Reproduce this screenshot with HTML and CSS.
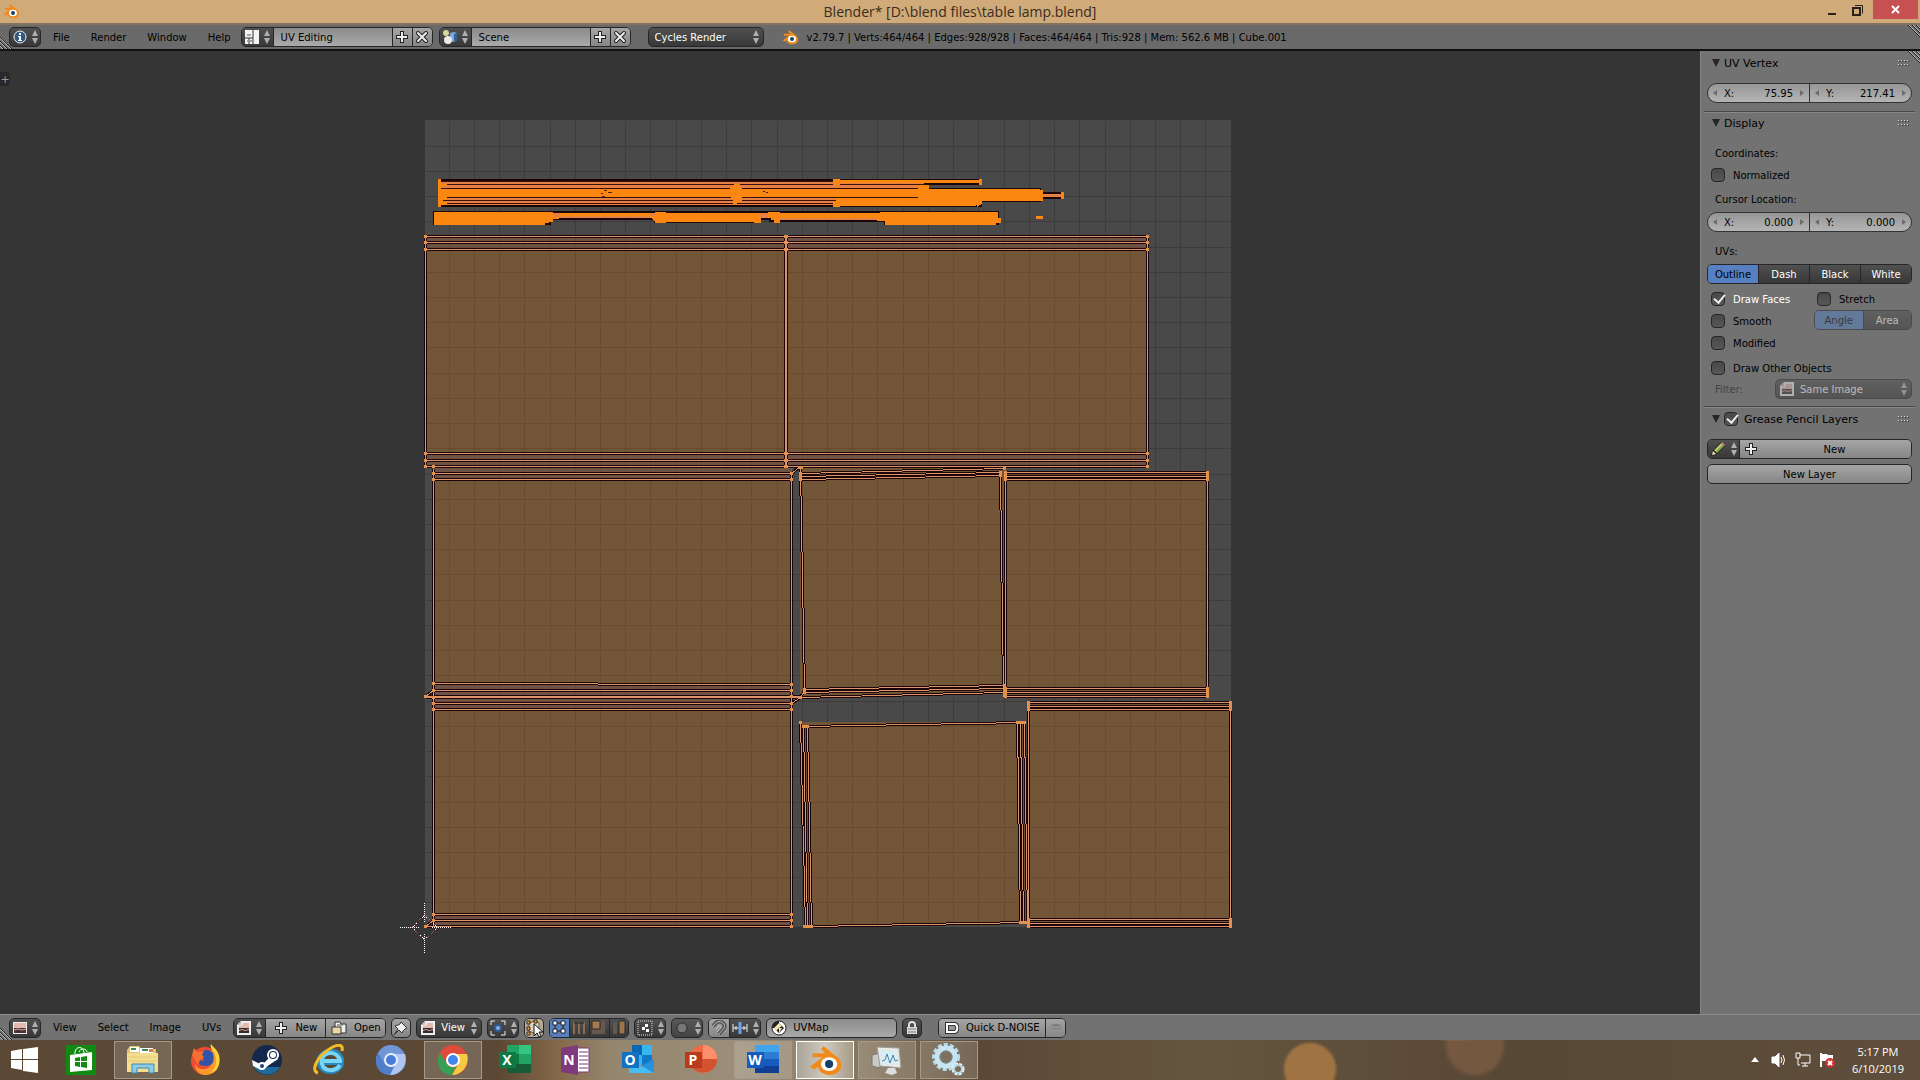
FILE: index.html
```html
<!DOCTYPE html>
<html lang="en">
  <head>
    <meta charset="utf-8">
    <title>Blender* [D:\blend files\table lamp.blend]</title>
    <link rel="stylesheet" href="styles.css">
  </head>
  <body>
    <!-- shared icons -->
    <svg class="defs" aria-hidden="true">
      <symbol id="updown" viewBox="0 0 6 14"><path d="M3 0L6 6H0zM3 14L6 8H0z"/></symbol>
      <symbol id="plus" viewBox="0 0 14 14"><path d="M5 1h4v4h4v4H9v4H5V9H1V5h4z" fill="#222"/><path d="M6 2h2v4h4v2H8v4H6V8H2V6h4z" fill="#eee"/></symbol>
      <symbol id="cross" viewBox="0 0 14 14"><path d="M3 3l8 8M11 3l-8 8" stroke="#222" stroke-width="4" stroke-linecap="round"/><path d="M3 3l8 8M11 3l-8 8" stroke="#eee" stroke-width="2" stroke-linecap="round"/></symbol>
      <symbol id="image" viewBox="0 0 14 14"><path d="M4 0h10v14H0V4z" fill="#eee"/><path d="M4 0v4H0z" fill="#b9b9b9"/><path d="M2 5h3l1-3h6v5H2z" fill="#e3b9ae"/><path d="M2 7h10v5H2z" fill="#3a2a2c"/><path d="M2 9l3-1 3 1 4-1v1l-4 1-3-1-3 1z" fill="#c9a49c"/></symbol>
      <symbol id="blender" viewBox="0 0 24 22"><path d="M1 16L10 9H3V6h9L9 3l2-2 9 7c3 2 4 4 4 7 0 4-4 7-9 7-4 0-8-3-8-6l-3 2z" fill="#f08a1c"/><ellipse cx="15" cy="14" rx="6" ry="5" fill="#fff"/><ellipse cx="15" cy="14" rx="3" ry="3" fill="#15406b"/></symbol>
      <symbol id="corner" viewBox="0 0 12 12"><path d="M0 0l12 12M4 0l8 8M8 0l4 4" stroke="#222"/><path d="M1 0l11 11M5 0l7 7M9 0l3 3" stroke="#bbb"/></symbol>
      <symbol id="grip" viewBox="0 0 11 6"><path d="M0 .5h11M0 4.5h11" stroke="#ddd" stroke-dasharray="1 2"/><path d="M1 1.5h11M1 5.5h11" stroke="#333" stroke-dasharray="1 2"/></symbol>
    </svg>

    <div class="title-bar">
      <svg class="title-logo" viewBox="0 0 24 22"><use href="#blender"/></svg>
      <h1>Blender* [D:\blend files\table lamp.blend]</h1>
      <div class="window-buttons">
        <button aria-label="Minimize"><svg width="12" height="12"><path d="M2 9h8v2H2z" fill="#2a2118"/></svg></button>
        <button aria-label="Restore"><svg width="12" height="12" fill="none" stroke="#2a2118"><path d="M1 4h7v7H1z" stroke-width="2"/><path d="M3 1.500h7.500v8"/></svg></button>
        <button class="close" aria-label="Close"><svg width="10" height="10"><path d="M1 1l7 7M8 1l-7 7" stroke="#fff" stroke-width="2"/></svg></button>
      </div>
    </div>

    <div class="header top-header">
      <svg class="corner start-corner"><use href="#corner"/></svg>
      <button class="menu-button" aria-label="Editor type">
        <svg width="14" height="14"><circle cx="7" cy="7" r="6" fill="#345a80" stroke="#e8eef4"/><path d="M6 3h2v2H6zM5 6h3v4h1v1H5v-1h1V7H5z" fill="#fff"/></svg>
        <svg class="updown"><use href="#updown"/></svg>
      </button>
      <nav class="menus">
        <button>File</button>
        <button>Render</button>
        <button>Window</button>
        <button>Help</button>
      </nav>
      <div class="group selector">
        <button class="dark" aria-label="Screen layout">
          <svg width="14" height="14"><path d="M0 0h14v14H0z" fill="#f4f4f4"/><path d="M8 0v14M0 8h8M4 8v6" stroke="#333"/><path d="M2 5h4M2 11h1M5 11h2" stroke="#555"/></svg>
          <svg class="updown"><use href="#updown"/></svg>
        </button>
        <input value="UV Editing" aria-label="Screen name">
        <button class="light" aria-label="Add screen"><svg width="14" height="14"><use href="#plus"/></svg></button>
        <button class="light" aria-label="Delete screen"><svg width="14" height="14"><use href="#cross"/></svg></button>
      </div>
      <div class="group selector">
        <button class="dark" aria-label="Scene list">
          <svg width="14" height="14"><circle cx="3" cy="3" r="3" fill="#d8d894"/><path d="M7 3l4-1 3 1v7l-3 2-4-1z" fill="#7fa9d8"/><path d="M11 4l3-1v7l-3 2z" fill="#35608f"/><circle cx="5" cy="10" r="4" fill="#e9e9e9"/></svg>
          <svg class="updown"><use href="#updown"/></svg>
        </button>
        <input value="Scene" aria-label="Scene name">
        <button class="light" aria-label="Add scene"><svg width="14" height="14"><use href="#plus"/></svg></button>
        <button class="light" aria-label="Delete scene"><svg width="14" height="14"><use href="#cross"/></svg></button>
      </div>
      <div class="select-box engine">
        <select aria-label="Render engine"><option>Cycles Render</option></select>
        <svg class="updown"><use href="#updown"/></svg>
      </div>
      <div class="stats">
        <svg width="16" height="14"><use href="#blender"/></svg>
        <span>v2.79.7 | Verts:464/464 | Edges:928/928 | Faces:464/464 | Tris:928 | Mem: 562.6 MB | Cube.001</span>
      </div>
      <svg class="corner"><use href="#corner"/></svg>
    </div>

    <div class="workspace">
      <main class="uv-editor">
        <button class="expand-tab" aria-label="Show tools">+</button>
        <svg class="uv-canvas" viewBox="0 51 1700 963">
          <defs>
            <g id="edges">
              <!-- shade sides -->
              <path d="M425 236H1147M425 242H1147M425 249H1147M425 453H1147M425 460H1147M425 466H1147M425 236V466M785 236V466M786 236V466M1147 236V466"/>
              <path d="M433 473H791M433 479H791M433 683H597M597 684H791M433 690H791M425 696H800M425 697H800M433 468V696M791 473V696M791 473L800 466M433 690L425 696"/>
              <path d="M433 703H791M433 709H791M433 914H791M433 920H791M425 926H791M433 697V926M791 697V926M791 703L800 697M433 920L425 926"/>
              <!-- tilted pieces -->
              <path d="M800 473L1004 468M801 476L1000 472M801 479L1000 475M800 467L804 690M1000 472L1003 690M804 689L1004 685M804 692L1004 688M800 697L1004 692M800 697L804 690"/>
              <path d="M800 722L805 926M803 726L807 926M807 726L811 926M1017 722L1020 922M1020 722L1023 922M1024 722L1027 922M803 726L1024 722M805 926H811L1027 922"/>
              <!-- right column -->
              <path d="M1005 472H1207M1005 476H1207M1005 479H1207M1005 688H1207M1005 692H1207M1005 696H1207M1005 472V696M1207 472V696"/>
              <path d="M1028 702H1230M1028 706H1230M1028 709H1230M1028 919H1230M1028 923H1230M1028 926H1230M1028 702V926M1230 702V926"/>
            </g>
          </defs>
          <rect class="uv-tile" x="425" y="120" width="806" height="807"/>
          <path class="grid" d="M449 120V926M474 120V926M499 120V926M524 120V926M550 120V926M575 120V926M600 120V926M625 120V926M650 120V926M676 120V926M701 120V926M726 120V926M751 120V926M777 120V926M802 120V926M827 120V926M852 120V926M877 120V926M903 120V926M928 120V926M953 120V926M978 120V926M1004 120V926M1029 120V926M1054 120V926M1079 120V926M1105 120V926M1130 120V926M1155 120V926M1180 120V926M1205 120V926
            M425 146H1231M425 171H1231M425 196H1231M425 221H1231M425 247H1231M425 272H1231M425 297H1231M425 322H1231M425 347H1231M425 373H1231M425 398H1231M425 423H1231M425 448H1231M425 474H1231M425 499H1231M425 524H1231M425 549H1231M425 574H1231M425 600H1231M425 625H1231M425 650H1231M425 675H1231M425 701H1231M425 726H1231M425 751H1231M425 776H1231M425 802H1231M425 827H1231M425 852H1231M425 877H1231M425 902H1231"/>
          <g class="faces">
            <path d="M425 236H1148V467H425zM433 467H792V927H433zM800 468H1004V692L800 697zM1005 472H1208V697H1005zM800 722L1024 722 1028 922 805 927zM1028 702H1231V927H1028z"/>
            <path class="strip" d="M425 236H1148V250H425zM425 453H1148V467H425zM433 467H792V480H433zM433 683H792V710H433zM433 914H792V927H433z"/>
          </g>
          <use href="#edges" class="edge-shadow"/>
          <use href="#edges" class="edge-line"/>
          <!-- lamp rods, packed too tight to tell the edges apart -->
          <path class="rod-outline" d="M439 180H981V184H925V189H1040V193H1063V198H1040V201H981V206H439zM434 212H998V224H885V221H770V219H755V222H655V219H550V224H434z"/>
          <path class="rod-lines" d="M439 181H836M439 184H925M439 188H925M439 197H918M439 200H838M439 203H838"/>
          <g class="solid">
            <path d="M441 189H918V197H441zM836 180H981V183H836zM918 189H1040V201H918zM836 198H976V206H836zM1039 190H1043V201H1039zM1061 192H1064V199H1061zM979 179H982V185H979z"/>
            <path d="M438 179h3v5h6v2h-6v3h10v8h-4v3h-4v2h4v3h-6v2h-3zM730 187h4v-3h6v4h2v14h-5v2h-4v-5h-2zM833 179h7v6h-7zM833 201h7v6h-7zM918 185h11v5h-11zM976 201h6v3l-5 3z"/>
            <path d="M434 212H553V217H559V219H553V222H545V225H434zM655 212H666V223H655zM650 216H760V222H655zM754 218H761V223H754zM559 213H650V216H559zM768 212H780V223H774V218H768zM666 213H760V221H666zM780 213H885V218H780zM880 212H998V218H1001V223H996V225H885V221H877zM1036 216H1043V219H1036z"/>
            <path class="specks" d="M596 188h2M603 190h3M600 193h2M607 192h4M601 196h3M762 191h2M765 192h2"/>
          </g>
          <path class="verts" d="M425 236h0M425 242h0M425 249h0M425 453h0M425 460h0M425 466h0M785 236h1M785 242h1M785 249h1M785 453h1M785 460h1M785 466h1M1147 236h0M1147 242h0M1147 249h0M1147 453h0M1147 460h0M1147 466h0
            M433 466h0M433 473h0M433 479h0M433 683h0M433 690h0M433 697h0M433 703h0M433 709h0M433 914h0M433 920h0M425 696h0M425 926h0M791 473h0M791 479h0M791 684h0M791 690h0M791 696h0M791 703h0M791 709h0M791 914h0M791 920h0M791 926h0
            M800 467h1M800 473v6M1004 468h0M1000 472v3M804 689v3M800 697h0M1004 685v10M1005 472v7M1207 472v7M1005 688v8M1207 688v8M800 722h0M803 726h4M1017 722h7M804 926h7M1020 922h6M1028 702v7M1230 702v7M1028 919v7M1230 919v7"/>
          <g class="cursor">
            <path class="cursor-red" d="M424 914L437 927 424 940 411 927z"/>
            <path d="M424 902V921M424 933V952M399 927H418M431 927H450M420 919l4-4 4 4M420 935l4 4 4-4M416 923l-4 4 4 4M433 923l4 4-4 4"/>
          </g>
        </svg>
      </main>

      <aside class="sidebar">
        <svg class="corner"><use href="#corner"/></svg>
        <section class="panel vertex">
          <h2><span class="tri"></span>UV Vertex<svg class="grip"><use href="#grip"/></svg></h2>
          <div class="number-pair">
            <label><i class="left"></i>X:<input value="75.95"><i class="right"></i></label>
            <label><i class="left"></i>Y:<input value="217.41"><i class="right"></i></label>
          </div>
        </section>
        <section class="panel display">
          <h2><span class="tri"></span>Display<svg class="grip"><use href="#grip"/></svg></h2>
          <p class="caption">Coordinates:</p>
          <label class="check"><input type="checkbox">Normalized</label>
          <p class="caption low">Cursor Location:</p>
          <div class="number-pair">
            <label><i class="left"></i>X:<input value="0.000"><i class="right"></i></label>
            <label><i class="left"></i>Y:<input value="0.000"><i class="right"></i></label>
          </div>
          <p class="caption">UVs:</p>
          <div class="group toggles">
            <button class="dark active">Outline</button>
            <button class="dark">Dash</button>
            <button class="dark">Black</button>
            <button class="dark">White</button>
          </div>
          <div class="options">
            <div class="option-column">
              <label class="check on"><input type="checkbox" checked>Draw Faces</label>
              <label class="check"><input type="checkbox">Smooth</label>
              <label class="check"><input type="checkbox">Modified</label>
            </div>
            <div class="option-column">
              <label class="check inset"><input type="checkbox">Stretch</label>
              <div class="group toggles disabled">
                <button class="dark active" disabled>Angle</button>
                <button class="dark" disabled>Area</button>
              </div>
            </div>
          </div>
          <label class="check"><input type="checkbox">Draw Other Objects</label>
          <div class="filter-row">
            <label for="filter">Filter:</label>
            <div class="select-box">
              <svg width="14" height="14"><use href="#image"/></svg>
              <select id="filter" disabled><option>Same Image</option></select>
              <svg class="updown"><use href="#updown"/></svg>
            </div>
          </div>
        </section>
        <section class="panel pencil">
          <h2><span class="tri"></span><label><input type="checkbox" checked>Grease Pencil Layers</label><svg class="grip"><use href="#grip"/></svg></h2>
          <div class="group">
            <button class="dark" aria-label="Grease pencil data">
              <svg width="16" height="16"><path d="M1 15l2-6 8-8 4 4-8 8z" fill="#222"/><path d="M4 9l7-7 3 3-7 7z" fill="#91a850"/><path d="M5 10l7-7" stroke="#d9e59c"/><path d="M11 2l1-1 3 3-1 1z" fill="#e08080"/><path d="M2 14l1-4 3 3z" fill="#f2dcb2"/></svg>
              <svg class="updown"><use href="#updown"/></svg>
            </button>
            <button class="light wide"><svg width="14" height="14"><use href="#plus"/></svg><span>New</span></button>
          </div>
          <button class="light single">New Layer</button>
        </section>
      </aside>
    </div>

    <div class="header bottom-header">
      <svg class="corner start-corner"><use href="#corner"/></svg>
      <button class="menu-button" aria-label="Editor type">
        <svg width="14" height="14"><path d="M0 1h14v12H0z" fill="#eee"/><path d="M1 2h12v5H1z" fill="#e3b9ae"/><path d="M1 7h12v5H1z" fill="#4a3136"/><path d="M1 9l4-1 4 1 4-1" stroke="#d9aca4" fill="none"/></svg>
        <svg class="updown"><use href="#updown"/></svg>
      </button>
      <nav class="menus">
        <button>View</button>
        <button>Select</button>
        <button>Image</button>
        <button>UVs</button>
      </nav>
      <div class="group">
        <button class="dark" aria-label="Browse image">
          <svg width="14" height="14"><use href="#image"/></svg>
          <svg class="updown"><use href="#updown"/></svg>
        </button>
        <button class="light action"><svg width="14" height="14"><use href="#plus"/></svg>New</button>
        <button class="light action"><svg width="16" height="14"><path d="M4 1h5l1 2h5v9H4z" fill="#eee" stroke="#333"/><path d="M1 6h9v7H1z" fill="#e9d9a0" stroke="#333"/><path d="M6 4h6" stroke="#555"/></svg>Open</button>
      </div>
      <button class="square" aria-label="Pin image"><svg width="16" height="16"><path d="M8 2l6 6-2 1-2 2-1 2-3-3-5 5 4-6-3-3 3-1 2-1z" fill="#eee" stroke="#333"/></svg></button>
      <div class="select-box view-mode">
        <svg width="14" height="14"><use href="#image"/></svg>
        <select aria-label="Editor mode"><option>View</option></select>
        <svg class="updown"><use href="#updown"/></svg>
      </div>
      <button class="menu-button" aria-label="Pivot">
        <svg width="16" height="16" fill="none"><path d="M1 5V1h4M11 1h4v4M15 11v4h-4M5 15H1v-4" stroke="#eee"/><circle cx="8" cy="8" r="3" fill="#8bb2e8" stroke="#2f5a94" stroke-width="2"/></svg>
        <svg class="updown"><use href="#updown"/></svg>
      </button>
      <button class="square sync" aria-label="Sync selection">
        <svg width="18" height="18"><path d="M4 4l5-2 5 2v8l-5 2-5-2z" fill="#d9d2c4" stroke="#6c5a40"/><path d="M2 2h3v3H2zM2 8h3v3H2zM2 13h3v3H2zM9 1h3v3H9z" fill="#f0a040" stroke="#402a10"/><path d="M9 5v12l3-3 2 4 2-1-2-4h4z" fill="#fff" stroke="#111"/></svg>
      </button>
      <div class="group modes">
        <button class="dark active" aria-label="Vertex"><svg width="16" height="16"><path d="M3 3h8v8H3z" stroke="#222" fill="none"/><path d="M1 1h4v4H1zM9 1h4v4H9zM1 9h4v4H1zM9 9h4v4H9z" fill="#fff" stroke="#222"/></svg></button>
        <button class="dark" aria-label="Edge"><svg width="16" height="16"><path d="M3 2v12M8 2v12M13 2v12" stroke="#8c6d50" stroke-width="2"/><path d="M3 3h10" stroke="#222"/></svg></button>
        <button class="dark" aria-label="Face"><svg width="16" height="16"><path d="M1 1h13v13H1z" fill="#66594d"/><path d="M1 1h8v8H1z" fill="#a67a4c" stroke="#2b2b2b"/></svg></button>
        <button class="dark" aria-label="Island"><svg width="16" height="16"><path d="M2 2h4v12H2z" fill="#5e5850"/><path d="M8 1h6v13H8z" fill="#9b744c" stroke="#2b2b2b"/></svg></button>
      </div>
      <button class="menu-button" aria-label="Sticky selection">
        <svg width="16" height="16"><path d="M1 1h14v14H1z" fill="none" stroke="#ddd" stroke-dasharray="1 1"/><path d="M8 4h3v3H8zM5 7h3v3H5zM9 9h3v3H9z" fill="#fff"/></svg>
        <svg class="updown"><use href="#updown"/></svg>
      </button>
      <button class="menu-button faded" aria-label="Proportional editing">
        <svg width="16" height="16"><circle cx="8" cy="8" r="5" fill="#777" stroke="#2e2e2e"/></svg>
        <svg class="updown"><use href="#updown"/></svg>
      </button>
      <div class="group">
        <button class="light snap" aria-label="Snap"><svg width="16" height="16" fill="none"><path d="M2 6l4-4c5-2 9 3 7 6l-5 6" stroke="#555" stroke-width="4"/><path d="M2 6l4-4c5-2 9 3 7 6l-5 6M5 9l3-3c2 0 2 1 2 2l-4 4" stroke="#bbb"/></svg></button>
        <button class="dark" aria-label="Snap element">
          <svg width="16" height="16"><path d="M1 4v8M15 4v8M4 6v4M12 6v4M1 8h14" stroke="#eee"/><path d="M8 2v12" stroke="#6aa2ee" stroke-width="3"/></svg>
          <svg class="updown"><use href="#updown"/></svg>
        </button>
      </div>
      <label class="uv-map">
        <svg width="16" height="16"><circle cx="8" cy="8" r="7" fill="#fff" stroke="#222"/><path d="M8 3L3 8H1c0-4 3-7 7-7zM8 3l5 5-5 5-5-5z" fill="#222"/><path d="M8 3l3 3-3 2-3 3-2-3zM8 8h3l-3 5z" fill="#f4e7b0"/></svg>
        <input value="UVMap" aria-label="UV map">
      </label>
      <button class="square dark lock" aria-label="Lock"><svg width="14" height="16"><path d="M4 8V5c0-4 6-4 6 0v3" fill="none" stroke="#ddd" stroke-width="2"/><path d="M2 7h10v7H2z" fill="#ddd"/><path d="M3 9h8M3 12h8" stroke="#777"/></svg></button>
      <div class="group denoise">
        <button class="light action"><svg width="14" height="12"><path d="M2 2h8c3 1 3 7 0 8H2z" fill="none" stroke="#333" stroke-width="4"/><path d="M2 2h8c3 1 3 7 0 8H2z" fill="none" stroke="#fff" stroke-width="2"/></svg>Quick D-NOISE</button>
        <button class="light arrow" aria-label="More"><svg width="14" height="12"><path d="M1 4c3-3 9-3 12 0-2 5-9 5-12 0z" fill="#808080"/><path d="M2 4c3 2 7 2 10 0" fill="none" stroke="#a8a8a8"/></svg></button>
      </div>
    </div>

    <footer class="taskbar">
      <button class="start" aria-label="Start"><svg width="28" height="26" fill="#fff"><path d="M0 4l11-2v10H0zM12 2l15-2v12H12zM0 13h11v10L0 21zM12 13h15v13l-15-2z"/></svg></button>
      <div class="apps">
        <button aria-label="Store"><svg width="30" height="30"><path d="M0 0h30v30H0z" fill="#118a11"/><path d="M4 10l22-3v18l-22 2z" fill="#fff"/><path d="M9 9V7c1-6 8-6 9 0v2M13 7c1-4 8-4 8 0" fill="none" stroke="#fff"/><path d="M9 13l5-1v4H9zM15 12l6-1v5h-6zM9 17h5v5l-5-1zM15 17h6v6l-6-1z" fill="#118a11"/></svg></button>
        <button class="open" aria-label="File Explorer"><svg width="34" height="32"><path d="M1 6l3-4h9l2 3h15v20H1z" fill="#e3c569"/><path d="M4 3h9v5H4zM14 4h13v5H14z" fill="#fff"/><path d="M5 5h5M16 6h6" stroke="#3b8b56" stroke-width="2"/><path d="M23 5h4v3h-4z" fill="#d77c51"/><path d="M1 9h31v19H1z" fill="#f3dd91"/><path d="M2 13h29M2 17h29" stroke="#e3ca77"/><path d="M6 29V20h22v9h-5v-5H11v5z" fill="#8dcbe8" stroke="#3d89b2"/></svg></button>
        <button aria-label="Firefox"><svg width="32" height="32"><circle cx="16" cy="17" r="14" fill="#ef4a32"/><path d="M16 31C34 31 33 10 22 2c2 6-1 7-3 9 5 4 4 13-3 14-5 1-9-2-10-6 0 7 4 12 10 12z" fill="#ff982a"/><path d="M22 0c-2 5 5 8 5 14 1 7-2 12-6 15 10-2 12-15 7-22-2-3-4-4-6-7z" fill="#ffd43b"/><path d="M11 10c3-5 9-5 13-1 2 9 0 13-8 13-5 0-7-3-7-6l5 1c2-3 1-3-3-3z" fill="#3055a8"/><path d="M3 11l2-7 3 4 7-1-2 4 2 2-4 3-2 5z" fill="#f5702e"/></svg></button>
        <button aria-label="Steam"><svg width="32" height="32"><circle cx="16" cy="16" r="15" fill="#14294b"/><path d="M3 23c6 10 20 10 26 0z" fill="#1d6b9d"/><path d="M1 16l10 5 6-6 4-5 6 5-9 6-5 4-3 1-8-4z" fill="#fff"/><circle cx="22" cy="11" r="6" fill="#fff"/><circle cx="22" cy="11" r="4" fill="#14294b"/><circle cx="22" cy="11" r="3" fill="#fff"/><circle cx="11" cy="22" r="4" fill="#fff"/><circle cx="11" cy="22" r="2" fill="#1a4370"/></svg></button>
        <button aria-label="Internet Explorer"><svg width="32" height="32" fill="none"><path d="M28 20c-3 9-18 10-21 0C4 8 23 2 28 15v3H10" stroke="#2789bd" stroke-width="6"/><path d="M27 21c-4 7-16 7-18-1C6 9 22 4 27 16v1H11" stroke="#79d5f5" stroke-width="4"/><path d="M5 29C-3 27 5 12 15 6c8-6 16-7 14 1" stroke="#f2bc29" stroke-width="3"/></svg></button>
        <button aria-label="Chromium"><svg width="32" height="32"><circle cx="16" cy="16" r="15" fill="#7096d7"/><path d="M16 10h14c3 10-4 21-15 21l6-12z" fill="#afc6ef"/><path d="M3 9l7 11c3 4 7 3 9 2l-4 9C2 31-2 18 3 9z" fill="#527dc8"/><circle cx="16" cy="16" r="7" fill="#e8effb"/><circle cx="16" cy="16" r="5" fill="#477cda"/></svg></button>
        <button class="open" aria-label="Chrome"><svg width="32" height="32"><circle cx="16" cy="16" r="15" fill="#df4a3b"/><path d="M16 10h14c3 10-4 21-15 21l7-12z" fill="#f7ca43"/><path d="M3 9l7 11c3 4 7 3 9 2l-4 9C2 31-2 18 3 9z" fill="#35a153"/><circle cx="16" cy="16" r="7" fill="#fff"/><circle cx="16" cy="16" r="5" fill="#4584ed"/></svg></button>
        <button aria-label="Excel"><svg width="32" height="30"><path d="M8 0h24v28H8z" fill="#20a464"/><path d="M20 0h12v9H20z" fill="#35c481"/><path d="M8 9h12v10H8z" fill="#107c41"/><path d="M8 19h24v9H8z" fill="#185c37"/><path d="M0 7h17v16H0z" fill="#107842"/><text x="8" y="20">X</text></svg></button>
        <button aria-label="OneNote"><svg width="32" height="30"><path d="M15 3h13v24H15z" fill="#fff" stroke="#7d397b"/><path d="M18 7h9M18 11h9M18 15h9M18 19h9M18 23h9" stroke="#7d397b"/><path d="M0 3l17-3v30L0 27z" fill="#80397b"/><text x="8" y="20">N</text></svg></button>
        <button aria-label="Outlook"><svg width="34" height="30"><path d="M10 0h20v20H10z" fill="#36b5ee"/><path d="M10 0h10v10H10z" fill="#0a67b5"/><path d="M20 10h10v10H20z" fill="#1478c8"/><path d="M7 14l13 8 12-8v14H7z" fill="#45bdf0"/><path d="M32 14v14L20 21z" fill="#2492dd"/><path d="M0 7h17v16H0z" fill="#1272c2"/><text x="8" y="20">O</text></svg></button>
        <button aria-label="PowerPoint"><svg width="32" height="30"><circle cx="18" cy="14" r="14" fill="#ed6c47"/><path d="M18 0c8 0 14 6 14 14H18z" fill="#ff8f6b"/><path d="M4 14h28c0 18-28 18-28 0z" fill="#d35230"/><path d="M0 7h17v16H0z" fill="#b83b1d"/><text x="8" y="20">P</text></svg></button>
        <button class="open" aria-label="Word"><svg width="32" height="30"><path d="M8 0h24v28H8z" fill="#2b7cd3"/><path d="M8 0h24v7H8z" fill="#41a5ee"/><path d="M8 14h24v7H8z" fill="#185abd"/><path d="M8 21h24v7H8z" fill="#103f91"/><path d="M0 7h17v16H0z" fill="#185abd"/><text x="8" y="20">W</text></svg></button>
        <button class="open current" aria-label="Blender"><svg width="34" height="30"><use href="#blender"/></svg></button>
        <button class="open" aria-label="Resource Monitor"><svg width="32" height="32"><path d="M1 11l8-2v15l-8-2z" fill="#c9cbc6" stroke="#777"/><path d="M6 3l22 1 2 20-21-2z" fill="#e9e9e3" stroke="#999"/><path d="M9 6l17 1 1 14-16-1z" fill="#d9edf4"/><path d="M11 17l3-1 2-6 3 9 3-8 2 6 3-1" stroke="#4585ac" fill="none"/><path d="M17 24h7l2 5-5 2-7-2z" fill="#ddd"/></svg></button>
        <button class="open" aria-label="Services"><svg width="34" height="34"><circle cx="14" cy="14" r="12" fill="none" stroke="#b7dcec" stroke-width="4" stroke-dasharray="4 2"/><circle cx="14" cy="14" r="9" fill="none" stroke="#c9e4ef" stroke-width="5"/><circle cx="14" cy="14" r="6" fill="none" stroke="#6b8b9b"/><circle cx="26" cy="26" r="5" fill="none" stroke="#e6f4fa" stroke-width="3" stroke-dasharray="3 1"/><circle cx="26" cy="26" r="4" fill="none" stroke="#b6d7e4" stroke-width="2"/></svg></button>
      </div>
      <div class="tray">
        <svg width="16" height="6"><path d="M8 0l4 5H4z" fill="#fff"/></svg>
        <svg width="16" height="16" fill="none" stroke="#fff"><path d="M1 5h3l4-4v14l-4-4H1z" fill="#fff"/><path d="M10 5q2 3 0 6M12 3q3 5 0 10"/></svg>
        <svg width="16" height="16" fill="none" stroke="#fff"><path d="M5 3h10v8H6M10 11v3M7 14h6M1 1h4v5H1zM3 6v7h2"/></svg>
        <svg width="16" height="16"><path d="M1 1h2v14H1zM3 2h5l1 1h5v7H9L8 9H3z" fill="#fff"/><circle cx="11" cy="11" r="5" fill="#cf3030"/><path d="M9 9l4 4M13 9l-4 4" stroke="#fff" stroke-width="2"/></svg>
        <div class="clock"><span>5:17 PM</span><span>6/10/2019</span></div>
      </div>
    </footer>
  </body>
</html>
```
FILE: styles.css
```css
*{
  box-sizing: border-box;
}
body{
  margin: 0;
  min-height: 100vh;
  display: flex;
  flex-direction: column;
  background: #353535;
  color: #000;
  font-family: "DejaVu Sans", sans-serif;
  font-size: 11px;
}
button, input, select{
  font: inherit;
  color: inherit;
  margin: 0;
  padding: 0;
  border: 0;
  background: none;
}
button{
  display: flex;
  align-items: center;
  justify-content: center;
  white-space: nowrap;
}
svg{
  display: block;
  flex: none;
}
.defs{
  position: absolute;
  width: 0;
  height: 0;
}

/* title bar */
.title-bar{
  display: grid;
  grid-template-columns: 1fr auto 1fr;
  height: 23px;
  background: #d0aa78;
  color: #3a2c1c;
}
.title-logo{
  width: 16px;
  height: 16px;
  margin: 3px;
}
.title-bar h1{
  margin: 0;
  font: 14px/23px "Open Sans", sans-serif;
}
.window-buttons{
  display: flex;
  justify-content: flex-end;
  padding-right: 2px;
}
.window-buttons button{
  width: 26px;
  height: 19px;
}
.window-buttons .close{
  width: 45px;
  margin-left: 2px;
  background: #c75050;
}

/* headers */
.header{
  position: relative;
  display: flex;
  align-items: center;
  padding-left: 9px;
  font-size: 10px;
}
.top-header{
  height: 28px;
  background: #6a6a6a;
  border-top: 2px solid #82725e;
  border-bottom: 2px solid #111;
}
.bottom-header{
  height: 26px;
  background: #727272;
  border-top: 1px solid #8c8c8c;
  gap: 5px;
}
.corner{
  position: absolute;
  width: 12px;
  height: 12px;
  right: 0;
  top: 0;
}
.start-corner{
  left: 0;
  right: auto;
  top: auto;
  bottom: 0;
  transform: rotate(180deg);
}
.menu-button, .dark, .select-box{
  background: linear-gradient(#505050, #383838);
  color: #fff;
}
.menu-button, .select-box, .square, .group, .uv-map, .single{
  height: 20px;
  border: 1px solid #262626;
  border-radius: 5px;
}
.menu-button{
  width: 32px;
  gap: 5px;
}
.updown{
  width: 6px;
  height: 14px;
  fill: #b0b0b0;
}
.menus{
  display: flex;
  gap: 21px;
  margin: 0 10px 0 12px;
}
.group{
  display: flex;
  overflow: hidden;
}
.group > * + *{
  border-left: 1px solid #262626;
}
.group .dark{
  width: 31px;
  gap: 5px;
}
.light, .square{
  background: linear-gradient(#a5a5a5, #868686);
}
.square{
  width: 20px;
}
.selector{
  margin-right: 6px;
}
.selector input{
  width: 119px;
  padding-left: 7px;
  background: linear-gradient(#8b8b8b, #aaa);
}
.selector .light{
  width: 20px;
}
.select-box{
  display: flex;
  align-items: center;
  padding: 0 4px;
}
.select-box select{
  flex: 1;
  min-width: 0;
  appearance: none;
  opacity: 1;
}
.engine{
  width: 116px;
  margin-left: 11px;
}
.engine select{
  padding-left: 2px;
}
.stats{
  display: flex;
  align-items: center;
  gap: 9px;
  margin-left: 18px;
}
.stats svg{
  height: 16px;
}

/* bottom header */
.bottom-header .menus{
  margin: 0 7px;
}
.group.toggles .active, .group.modes .active{
  background: #5680c2;
  color: #000;
}
.action{
  width: 60px;
  gap: 7px;
}
.view-mode{
  width: 66px;
  gap: 6px;
}
.sync{
  background: #b5ab9c;
}
.modes{
  width: 80px;
}
.group.modes .dark{
  flex: 1;
}
.faded{
  background: linear-gradient(#585858, #444);
}
.snap{
  width: 20px;
}
.uv-map{
  display: flex;
  align-items: center;
  width: 131px;
  gap: 6px;
  padding-left: 4px;
  background: linear-gradient(#8b8b8b, #aaa);
}
.uv-map input{
  min-width: 0;
}
.lock{
  background: linear-gradient(#505050, #383838);
}
.denoise{
  margin-left: 11px;
}
.denoise .action{
  width: 106px;
}
.arrow{
  width: 20px;
}

/* uv editor */
.workspace{
  flex: 1;
  display: flex;
  min-height: 0;
}
.uv-editor{
  position: relative;
  flex: 1;
  min-width: 0;
  background: #353535;
}
.uv-canvas{
  width: 100%;
  height: 100%;
  shape-rendering: crispEdges;
}
.expand-tab{
  position: absolute;
  left: 0;
  top: 21px;
  width: 10px;
  height: 14px;
  border-radius: 0 4px 4px 0;
  background: #282828;
  color: #999;
}
.uv-tile{
  fill: #494949;
}
.grid, .edge-shadow, .edge-line, .rod-lines, .verts, .cursor, .specks{
  fill: none;
  transform: translate(0.5px, 0.5px);
}
.grid{
  stroke: #3c3c3c;
}
.faces{
  fill: #ff8500;
  fill-opacity: .235;
}
.faces .strip{
  fill: #64407a;
  fill-opacity: .2;
}
.edge-shadow{
  stroke: #1c0508;
  stroke-width: 3;
}
.edge-line{
  stroke: #dc946a;
}
.rod-outline{
  fill: #e68040;
  stroke: #1c0508;
  stroke-width: 2;
}
.rod-lines{
  stroke: #3a0f10;
}
.solid{
  fill: #fb8710;
}
.specks{
  stroke: #4a2308;
}
.verts{
  stroke: #e2914c;
  stroke-width: 3;
  stroke-linecap: square;
}
.cursor{
  stroke: #fff;
  stroke-dasharray: 1 1;
}
.cursor-red{
  stroke: #b04a4a;
  stroke-dasharray: 3 3;
}

/* sidebar */
.sidebar{
  position: relative;
  width: 220px;
  padding: 1px 5px 0 3px;
  background: #727272;
  border-left: 1px solid #848484;
  font-size: 10px;
}
.panel{
  padding: 0 3px 7px;
  border-bottom: 1px solid #484848;
  box-shadow: 0 1px #878787;
}
.vertex{
  padding-bottom: 8px;
}
.panel:last-child{
  border: 0;
  box-shadow: none;
}
.panel h2{
  display: flex;
  align-items: center;
  height: 22px;
  margin: 0 0 9px;
  padding: 0 3px 0 5px;
  font-size: 11px;
  font-weight: normal;
}
.panel h2 label{
  display: flex;
  align-items: center;
  gap: 6px;
}
.tri{
  margin-right: 4px;
  border: 4px solid transparent;
  border-top: 8px solid #262626;
  border-bottom: 0;
}
.grip{
  width: 11px;
  height: 6px;
  margin-left: auto;
}
.number-pair{
  display: flex;
  height: 20px;
  border: 1px solid #333;
  border-radius: 10px;
  background: linear-gradient(#969696, #b4b4b4);
}
.number-pair label{
  flex: 1;
  display: flex;
  align-items: center;
  min-width: 0;
  padding: 0 5px;
}
.number-pair label + label{
  border-left: 1px solid #333;
}
.number-pair input{
  flex: 1;
  min-width: 0;
  margin-right: 7px;
  text-align: right;
}
.number-pair i{
  border: 3px solid transparent;
}
.number-pair .left{
  border-right: 4px solid #6b6b6b;
  border-left: 0;
  margin-right: 7px;
}
.number-pair .right{
  border-left: 4px solid #6b6b6b;
  border-right: 0;
}
.caption{
  margin: 0;
  padding-left: 8px;
  line-height: 20px;
}
.display h2{
  margin-bottom: 10px;
}
.display .number-pair{
  margin: 2px 0 10px;
}
.caption.low{
  margin-top: 4px;
}
.caption + .toggles{
  margin-top: 2px;
}
.check{
  display: flex;
  align-items: center;
  gap: 8px;
  height: 22px;
  padding-left: 4px;
}
.check.on{
  color: #fff;
}
.check.inset{
  padding-left: 3px;
}
input[type="checkbox"]{
  appearance: none;
  width: 14px;
  height: 14px;
  border: 1px solid #262626;
  border-radius: 4px;
  background: linear-gradient(#484848, #585858);
}
input[type="checkbox"]:checked::after{
  content: "";
  display: block;
  width: 5px;
  height: 9px;
  margin: -1px 0 0 4px;
  border: solid #eee;
  border-width: 0 2px 2px 0;
  transform: rotate(40deg);
}
.group.toggles .dark{
  flex: 1;
}
.options{
  display: flex;
  justify-content: space-between;
  margin: 4px 0 3px;
}
.option-column:last-child{
  width: 98px;
}
.disabled{
  opacity: .5;
}
.filter-row{
  display: flex;
  align-items: center;
  justify-content: space-between;
  padding-left: 8px;
  color: #444;
}
.filter-row .select-box{
  width: 137px;
  gap: 6px;
  opacity: .5;
}
.pencil h2{
  height: 24px;
  margin-bottom: 8px;
}
.wide{
  flex: 1;
  padding-left: 4px;
}
.wide span{
  flex: 1;
}
.single{
  width: 100%;
  margin-top: 5px;
}

/* taskbar */
.taskbar{
  display: flex;
  height: 40px;
  color: #fff;
  background:
    radial-gradient(circle at 1310px 29px, #9f7442 24px, transparent 28px),
    radial-gradient(ellipse at 1456px 0, #86613e 18px, transparent 25px),
    radial-gradient(circle at 1475px 6px, #755840 26px, transparent 32px),
    linear-gradient(90deg, #5b4935 500px, #87694a 560px, #94866e 610px, #9c8f79 740px, #89795f 850px, #5b4935 980px, #65563f 1200px, #574735 1500px, #5e4e3b);
}
.start{
  width: 50px;
}
.apps{
  display: flex;
  gap: 4px;
  padding: 1px 2px;
}
.apps button{
  width: 58px;
  height: 38px;
}
.apps text{
  fill: #fff;
  font: bold 14px "Open Sans", sans-serif;
  text-anchor: middle;
}
.apps .open{
  border: 1px solid #a39a8b;
  background: rgba(255, 255, 255, .16);
}
.apps .current{
  border-color: #fff;
  background: linear-gradient(90deg, #aaa499, #d0c9bd, #a69b88);
}
.tray{
  display: flex;
  align-items: center;
  gap: 8px;
  margin-left: auto;
  padding-right: 16px;
}
.clock{
  display: flex;
  flex-direction: column;
  align-items: center;
  margin-left: 9px;
  font: 11px/17px "Open Sans", sans-serif;
}
```
